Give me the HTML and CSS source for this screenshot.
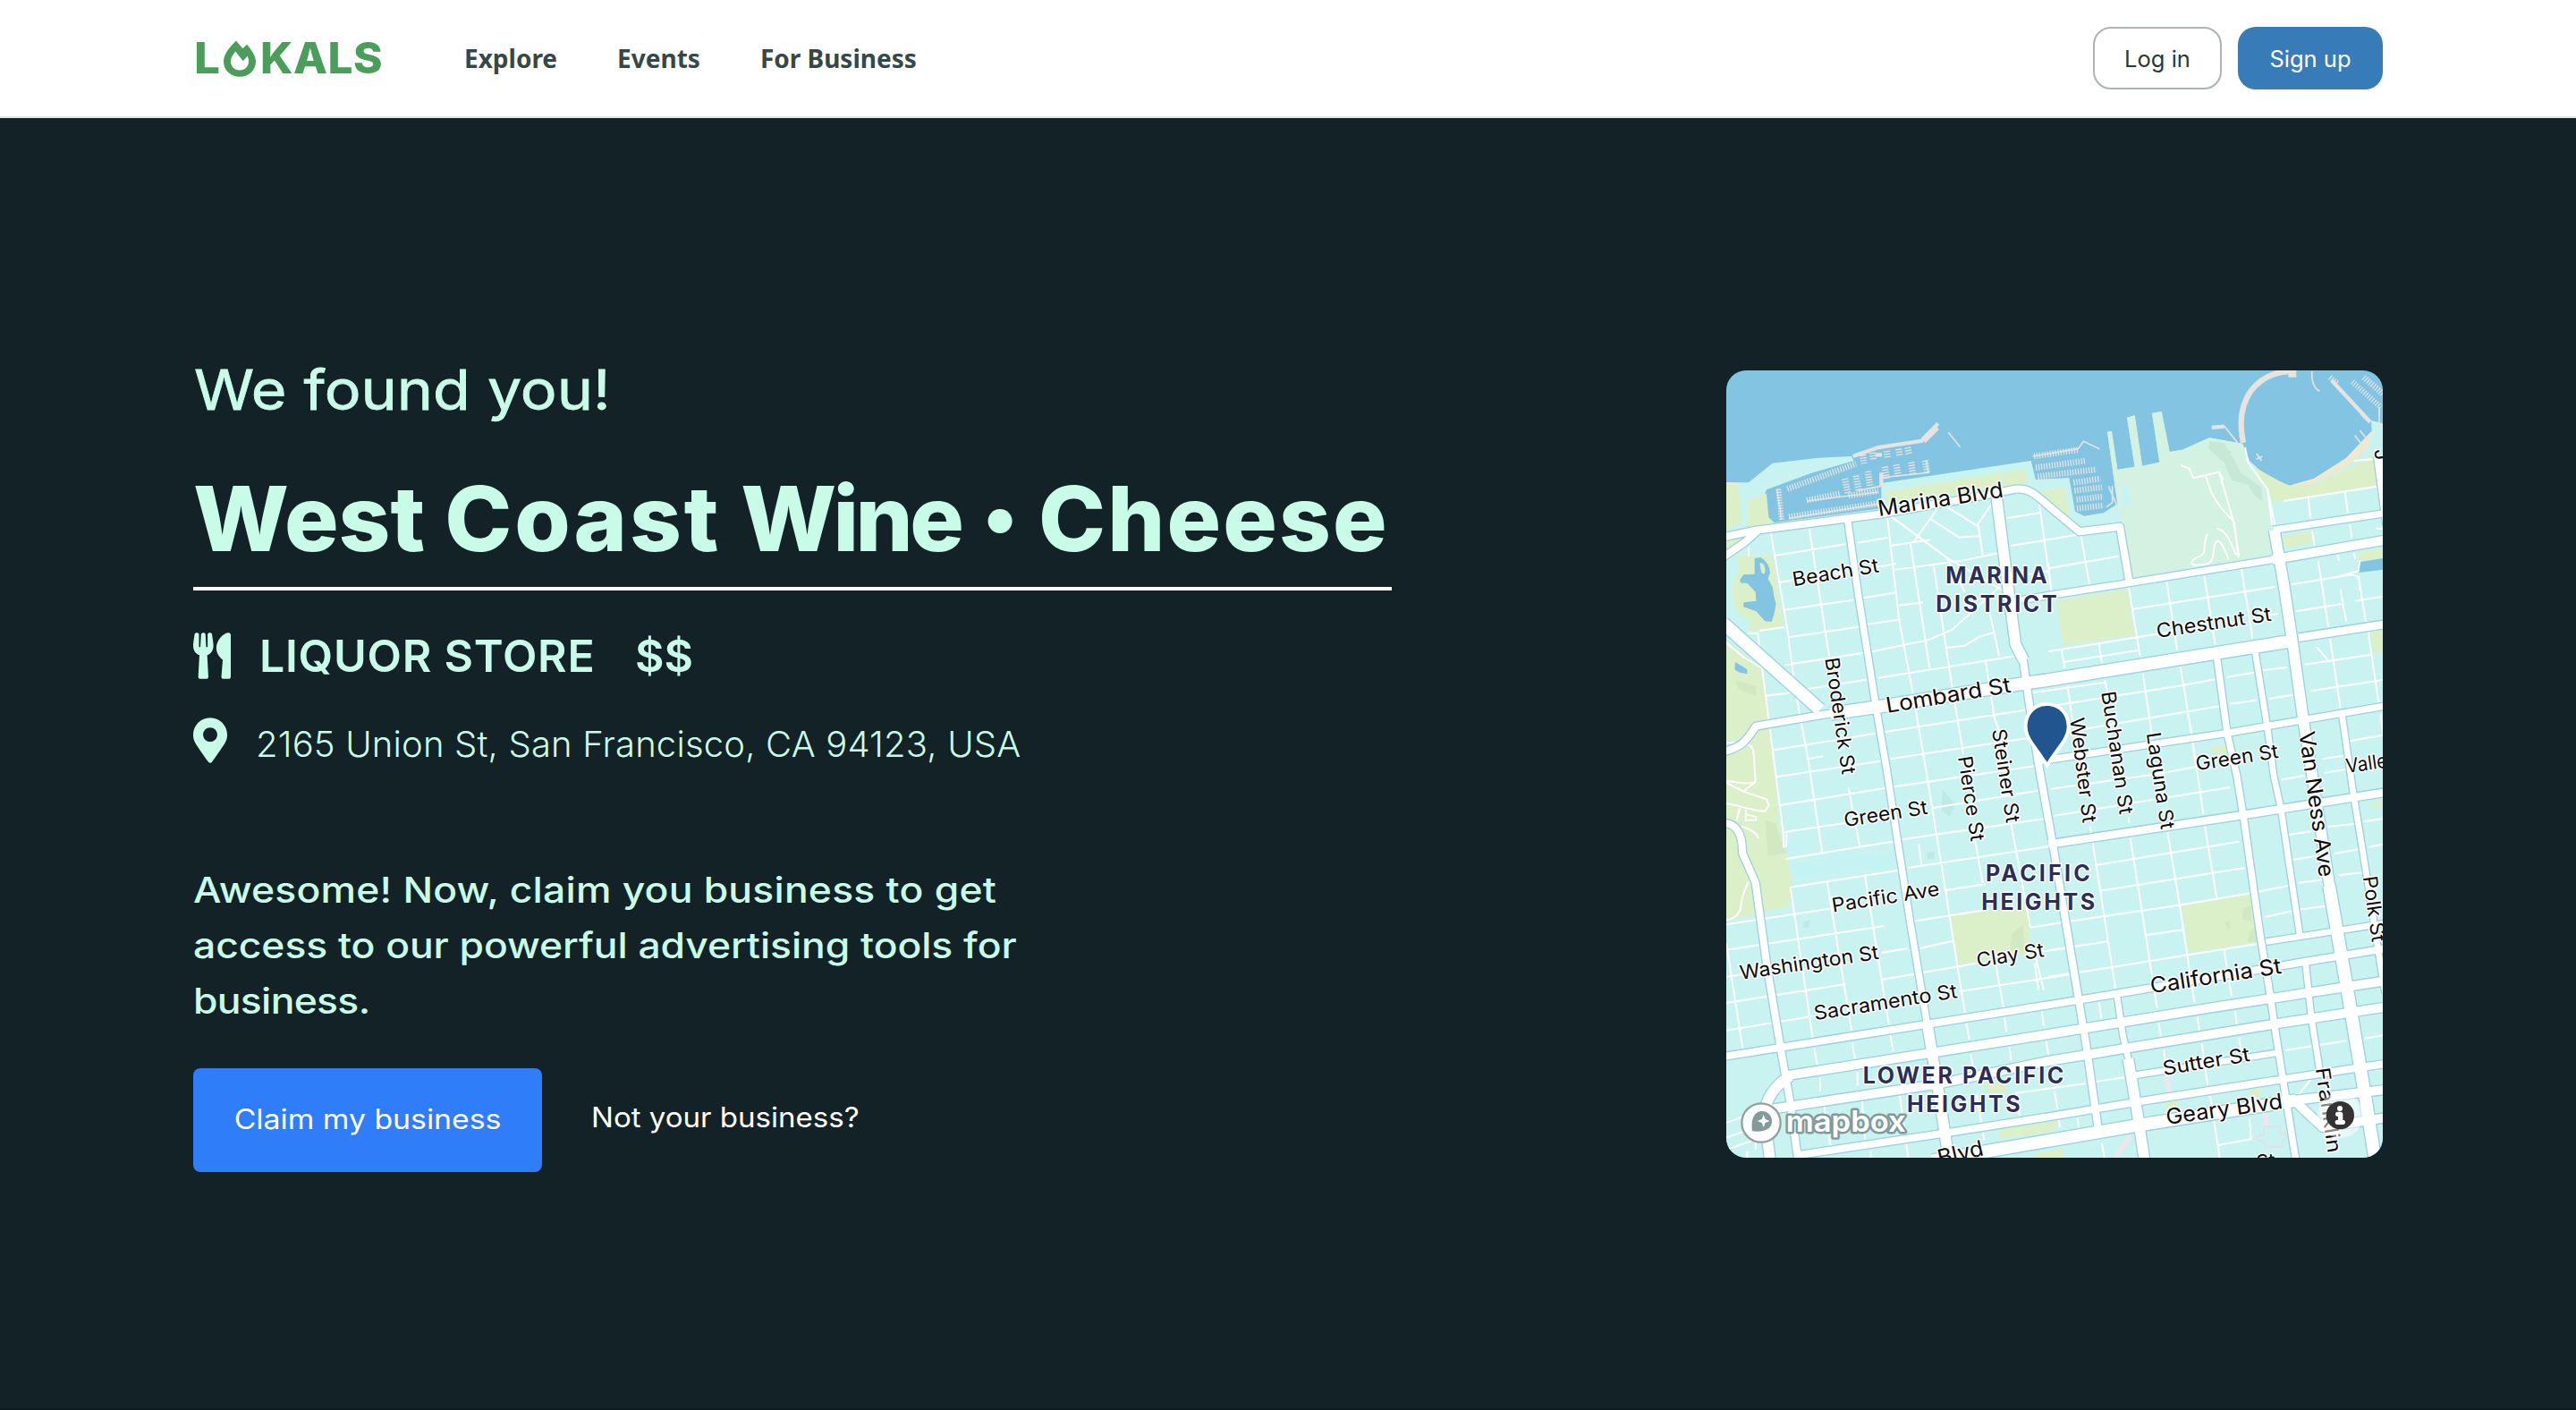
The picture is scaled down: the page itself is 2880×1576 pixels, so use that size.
FILE: index.html
```html
<!DOCTYPE html>
<html lang="en">
<head>
<meta charset="utf-8">
<title>Lokals</title>
<link rel="stylesheet" href="styles.css">
</head>
<body>
<header class="topbar">
  <a class="logo"><span class="logo-l">L</span><svg class="flame" viewBox="135 40 108 122"><path fill-rule="evenodd" d="M177 41L199 67L213 54C228 72 243 92 243 110C243 140 219 162 189 162C159 162 135 140 135 110C135 86 154 64 177 41ZM175 77C165 89 159 98 159 110C159 128 172 140 189 140C206 140 219 128 219 110C219 104 218 99 215 93L200 109Z"/></svg><span class="logo-rest">KALS</span></a>
  <nav class="nav"><a>Explore</a><a>Events</a><a>For Business</a></nav>
  <div class="auth"><button class="btn login">Log in</button><button class="btn signup">Sign up</button></div>
</header>
<main class="hero">
  <section class="copy">
    <p class="kicker">We found you!</p>
    <h1 class="title">West <span class="coast">Coast</span> <span class="wine">Wine</span> <span class="bullet">•</span> <span class="cheese">Cheese</span></h1>
    <div class="row category">
      <svg class="utensils" viewBox="0 0 416 512"><path d="M207.9 15.2c.8 4.7 16.1 94.5 16.1 128.8 0 52.3-27.8 89.6-68.9 104.6L168 486.7c.7 13.7-10.2 25.3-24 25.3H80c-13.7 0-24.7-11.5-24-25.3l12.9-238.1C27.7 233.6 0 196.2 0 144 0 109.6 15.3 19.9 16.1 15.2 19.3-5.1 61.4-5.4 64 16.3v141.2c1.3 3.4 15.1 3.2 16 0 1.4-25.3 7.9-139.2 8-141.8 3.3-20.8 44.7-20.8 47.9 0 .2 2.7 6.6 116.5 8 141.8.9 3.2 14.8 3.4 16 0V16.3c2.6-21.6 44.8-21.4 47.9-1.1zm119.2 285.7l-15 185.1c-1.2 14 9.9 26 23.9 26h56c13.3 0 24-10.7 24-24V24c0-13.2-10.7-24-24-24-82.5 0-221.4 178.5-64.9 300.9z"/></svg>
      <span class="kind">LIQUOR STORE</span><span class="price">$$</span>
    </div>
    <div class="row address">
      <svg class="marker" viewBox="0 0 384 512"><path d="M172.268 501.67C26.97 291.031 0 269.413 0 192 0 85.961 85.961 0 192 0s192 85.961 192 192c0 77.413-26.97 99.031-172.268 309.67-9.535 13.774-29.93 13.773-39.464 0zM192 272c44.183 0 80-35.817 80-80s-35.817-80-80-80-80 35.817-80 80 35.817 80 80 80z"/></svg>
      <span class="street">2165 Union St, San Francisco, CA 94123, USA</span>
    </div>
    <p class="pitch"><span class="line-a">Awesome! Now, claim you business to get</span><br><span class="line-b">access to our powerful advertising tools for</span><br><span class="line-c">business.</span></p>
    <div class="actions"><button class="claim"><span>Claim my business</span></button><a class="not-yours">Not your business?</a></div>
  </section>
  <svg class="map" viewBox="30 42 2202 2640">
    <defs>
      <g id="roads">
        <path class="w20" d="M1803 980L1845 1240L1866 1400L1890 1510L1955 1945M1972 2020L1992 2210L2022 2400M2095 1195L2130 1440L2180 1750L2225 2040L2240 2130M1840 1958L2240 1896M1390 2407L1890 2328M1340 2135L1360 2270L1378 2350"/>
        <path class="w22" d="M1080 1352L1710 1258L1970 1213L2240 1167M1675 1000L1710 1258L1742 1400L1765 1540L1820 1930L1850 2110L1875 2280L1905 2470L1942 2700M435 530L472 790L537 1200L568 1380L600 1590L645 1880L703 2230M1865 577L2240 521M1020 812L1110 797L1380 755L1860 677"/>
        <path class="w24" d="M20 601L130 578L540 525L850 470L1000 440C1040 436 1060 450 1115 500L1215 583L1350 566L1383 760M20 668L90 620L135 580M20 1322C90 1300 95 1285 130 1235L350 1197L540 1170M20 1560C60 1560 85 1590 84 1660L128 1760L165 2030L213 2320L245 2500L272 2700M280 2672L780 2597L1110 2545L1420 2493L1890 2420L2240 2367M20 2343L215 2312L700 2235L1110 2170L1460 2112L1970 2025L2240 1981M1025 1010L1045 1150L1075 1350L1125 1630L1170 1900L1215 2170L1238 2310L1278 2590"/>
        <path class="w26" d="M1950 938L2240 893M1110 1631L1750 1535L2240 1457"/>
        <path class="w30" d="M1860 677L2240 611M225 2408L720 2330L1110 2268L1650 2180L2240 2089M150 2524L740 2435L1110 2358L1390 2312L1880 2232L2240 2177M1930 2490L2240 2454M1935 2490L2030 2580L2240 2548M2217 330L2248 560"/>
        <path class="w36" d="M245 2408C190 2440 160 2490 158 2540L178 2700M703 2225L720 2330L745 2480L778 2700M937 470L975 770L1000 960L1028 1015M1378 2350L1410 2540L1434 2700M1868 577L1900 760L1930 960L1967 1225L1995 1400L2055 1780L2080 1930"/>
        <path class="w42" d="M20 890L345 1180M380 1193L540 1170L1040 1090L1110 1080L1935 948M720 2692L1110 2625L1420 2572L1940 2490M2052 1770L2080 1930L2120 2160L2175 2490L2208 2700"/>
      </g>
    </defs>
    <rect class="water" x="30" y="42" width="2202" height="2640"/>
    <path class="land" d="M20 418L105 418L185 353L340 335L450 330L458 345L320 385L165 442L160 452L172 535L190 553L550 505V420L1052 345L1068 408L1180 402L1200 515L1230 530L1295 520L1342 490L1308 248L1323 246L1342 375L1400 365L1374 200L1400 193L1425 362L1483 350L1458 185L1490 180L1517 315L1560 308L1650 268L1762 288L1785 345L1840 395L1920 428L2020 400L2110 335L2195 245L2193 210L2240 222V2700H20Z"/>
    <path class="sand" d="M20 416L70 420V430H20ZM1900 425L1920 428L2000 405L2110 335L2195 245L2185 300L2100 375L1990 425L1920 435Z"/>
    <path class="fort" d="M1308 248L1323 246L1342 375L1400 365L1374 200L1400 193L1425 362L1483 350L1458 185L1490 180L1517 315L1560 308L1650 268L1762 288L1775 350L1840 440L1860 580L1862 665L1392 737L1360 560L1342 490Z"/>
    <path class="fort-hill" d="M1650 280L1700 285L1735 345L1755 385L1825 435L1828 480L1800 460L1780 425L1725 410L1700 350L1648 305ZM1690 308L1722 312V345L1700 335Z"/>
    <path class="park" d="M20 425L70 428L84 550L20 585ZM100 480L165 455L172 535L190 553L100 568ZM30 610L110 600L60 635L30 650ZM60 662H185L222 900L100 918L115 880C70 870 45 830 50 770C55 720 90 715 60 662ZM20 940L155 1045L180 1240L205 1560L230 1650L252 1760L240 1840L30 1890H20V1340L90 1310L130 1260L165 1180ZM20 940L150 1050L172 1200L100 1260L20 1300ZM568 447L1030 372L1045 420L1000 425L570 485ZM1080 445L1165 435L1182 535L1110 475ZM1138 815L1375 775L1398 930L1160 965ZM1895 598L1992 580L1996 620L1900 637ZM1800 365L1920 433L2010 420L2120 370L2195 320L2215 428L1865 485L1835 430ZM2145 655L2232 640V672L2150 680ZM2190 920L2232 912V985L2200 992ZM1653 1305L1710 1298V1325L1660 1330ZM2190 1495L2232 1485V1505L2192 1510ZM780 1870L1035 1835L1055 1995L808 2035ZM1557 1835L1785 1802L1812 1960L1582 1995ZM890 2435L970 2430V2465L910 2470ZM945 2588L1140 2560V2590L945 2620ZM1060 2670L1160 2650V2682H1060ZM1500 2500L1545 2492L1550 2515L1505 2520ZM1788 2455L1820 2450L1825 2475L1790 2480Z"/>
    <path class="park-shade" d="M160 1550L195 1560L230 1660L170 1670ZM60 1080L130 1100V1135L70 1110ZM990 1930L1025 1900L1030 1990L980 1985ZM1765 1845L1790 1835V1890L1760 1880ZM1700 1895L1720 1890V1920ZM1785 1925L1810 1900V1958L1780 1960Z"/>
    <path class="land-shade" d="M755 1447L797 1495L780 1540L752 1515ZM705 1658L728 1655V1680H703ZM290 1890L312 1887L305 1910H288Z"/>
    <path class="land-hi" d="M230 1610L310 1610V1640L230 1660ZM245 1700C380 1670 480 1680 590 1660V1710L260 1740ZM1355 432L1378 430L1382 490L1362 498Z"/>
    <path class="pond" d="M125 672L145 669C165 680 175 700 177 720L170 740L186 770L190 800L197 825L190 860L182 885L160 883L130 850L88 835V820L130 815L128 785L100 755H80L75 745L88 727L125 725ZM60 1020L85 1035L100 1045V1060L75 1055L58 1045ZM2152 685L2232 672V710L2152 720Z"/>
    <path class="park" d="M142 690C155 680 165 710 158 725L148 720Z"/>
    <path class="rose" d="M1505 2410L1518 2465M1840 2535V2575M1385 2610L1335 2682"/>
    <path class="rose-line" d="M1832 2578H1890V2600H1906V2625H1895V2645H1835V2628L1808 2620V2612L1832 2605Z"/>
    <g class="dock">
      <path class="d20" d="M690 278L736 232"/><path class="d10" d="M455 330L540 300L690 278M690 276L740 220M550 385V430M530 325H552M2060 75L2190 215M2160 185L2190 215M1658 234L1700 230"/>
      <path class="d16" d="M1764 285C1750 220 1755 160 1790 110C1830 60 1880 45 1930 45"/>
      <path class="d14" d="M1915 48H1942"/>
      <path class="d4" d="M775 250L815 300M545 402L708 385L700 342M1058 330L1210 305L1228 280L1282 305M1995 45C1990 80 2005 105 2020 112M1700 228L1745 285M1808 320L1825 345M1808 340L1828 330M2138 260L2165 295L2155 335M2155 243L2185 280M1325 430V485L1305 500M1312 430L1340 495M470 445L560 428M240 538L540 490M300 480L540 450M2220 165V230M200 440L215 540"/>
      <path class="comb16" d="M205 440L216 545M2055 65L2080 85M2130 80L2225 165"/>
      <path class="comb20" d="M235 440L465 355M300 478L410 455M240 533L540 488M440 462L540 446M1062 330L1210 308M1068 368L1235 345M1075 398L1272 374M2168 65L2232 120"/>
      <path class="comb22" d="M428 405L438 455M465 395L475 448M505 380L512 430M600 358L608 400M562 365L568 405M650 350L656 390M697 345L703 385M488 325L492 355M520 318L524 345M568 312L571 335M608 305L612 330M638 300L643 322"/>
      <path class="comb20" d="M1195 418L1285 405M1198 445L1290 434M1205 475L1295 465M1206 505L1296 495"/>
    </g>
    <g class="minor">
      <path d="M180 590L238 930L250 1030L275 1190L305 1350L352 1660M308 570L375 1000M570 535L610 880L655 1120L698 1370L750 1690L830 2195M648 625L712 1040M725 695L787 1100L825 1330M580 530L770 670L975 790M735 510L660 615M715 540L810 602L880 597M770 500L870 562L920 490M875 560L890 660M770 670L830 785M950 765L790 910L710 945L520 985M770 972L830 965L880 935L930 920M915 860L945 1000M900 1020L930 1210L945 1250M190 663L430 625M470 620L570 603M580 630L715 610M597 710L820 680L940 655M210 752L440 718M480 712L600 690M225 845L455 812M490 805L600 787M610 830L690 820M240 937L485 900M505 893L615 877M225 1030L520 985M250 1118L510 1078M540 1073L1000 1000M165 1133L280 1118M105 635V665M100 923H135M140 915L225 903M135 920L150 1040L190 1350L222 1600V1640L232 1635V1590M190 1315L540 1258L1040 1180M580 1345L1040 1275M303 1345L355 1336M200 1405L560 1350M210 1500L580 1440L1090 1365M225 1590L430 1560M720 1510L1085 1450M620 1615L1100 1545M230 1680L600 1620M640 1710L1115 1638M245 1775L610 1718M765 1785L900 1765M30 1900L390 1845M650 1890L780 1870L900 1852M1050 1910L1150 1895M30 1985L560 1905M680 1980L790 1955M30 2075L100 2065M550 1995L640 1980M30 2163L430 2100M550 2085L870 2030M1060 1995L1180 1978M30 2255L320 2207M810 2125L1200 2065M30 2565L110 2535M30 2615L100 2590M30 2655L130 2620L128 2655M100 2660V2682M245 1775L320 2280M368 1755L450 2255M495 1735L575 2235M30 1965L85 2315M440 1440L478 1640M865 1620L890 1760M985 1560L1050 1910M1060 1980L1095 2120M675 1630L685 1700M935 2040L960 2180M1065 2030L1077 2120M325 2315L335 2370M452 2295L462 2350M580 2270L590 2325M835 2230L845 2285M963 2212L970 2260M1088 2190L1095 2240M345 2415V2460M470 2395V2440M850 2335L858 2380M980 2310L985 2355M1103 2290L1110 2335M358 2505L380 2645M485 2485L495 2620M515 2660V2682M610 2460L640 2682M870 2470L895 2625M1000 2460L1015 2540M1000 2465L1110 2450"/>
      <path d="M30 955L90 1005L150 1040M30 1290C50 1290 80 1290 110 1300C125 1310 122 1340 128 1420L120 1425C90 1430 60 1420 30 1420M30 1425L90 1455L165 1480L173 1500L160 1520C110 1520 80 1500 30 1495M75 1510L65 1550M95 1515V1555M95 1530L130 1540V1550H100M30 1885C70 1880 80 1850 80 1830C85 1790 100 1770 105 1755M80 1570C110 1580 130 1590 138 1610M128 1420C125 1430 95 1440 90 1455"/>
      <path d="M1120 1445L1480 1395L1610 1370M1130 1535L1720 1440M1265 1702L1750 1622M1280 1788L1770 1710M1110 1900L1550 1835L1790 1795M1110 1987L1310 1957M1440 1935L1560 1918M1215 2060L1810 1965M1110 2075L1180 2065M1890 1415L1970 1400M2035 1392L2120 1378M1910 1600L1990 1588M2050 1572L2140 1562M1930 1683L2010 1670M2070 1662L2150 1648M1815 1790L1940 1765M1950 1760L2030 1750M2085 1735L2170 1725M1835 1875L1950 1850L2040 1838M2170 1555L2232 1545M2185 1640L2232 1632M2170 2282L2232 2272M1905 2322L2110 2290M1270 2427L1365 2413M1110 2450L1235 2433M1680 2640L1790 2620L1785 2550M1250 1570L1285 1790L1335 2115M1380 1540V1560M1385 1610L1425 1860L1475 2180M1510 1590L1550 1830L1600 2160M1635 1570L1675 1810M1700 1985L1725 2140M1595 1290L1630 1530M1280 2160L1288 2215M1480 2230L1488 2275M1610 2210L1617 2255M1737 2190L1742 2235M1498 2320L1505 2400M1625 2300L1645 2440M1750 2280L1758 2325M1653 2475L1685 2682M1290 2635L1298 2682M1208 2550L1212 2580M1145 2555L1150 2580M1130 2460L1142 2520M1950 2470L1990 2420"/>
      <path d="M970 538L1080 520M1080 490L1120 780M985 630L1345 570M1115 705L1345 665M1020 730L1110 715M1220 595L1248 760M1110 690L1120 780M1390 843L1870 768M1110 985L1510 920M1160 1020L1415 980M1800 870L1880 858M1925 760L2120 728C2150 725 2155 740 2155 780M1940 850L2095 825M2140 815L2232 800M1970 1028L2195 995M1990 1117L2232 1080M1040 1125L1300 1088M1040 1180L1560 1098L1670 1078M1710 1070L1800 1055M1830 1048L1910 1038M1080 1270L1685 1168M1720 1160L1810 1148M1850 1143L1930 1130M1900 480L2232 428M2135 345L2200 340M1380 770L1418 1000M1507 750L1542 980M1633 730L1670 960M1758 708L1795 940M1982 470L1990 540M2105 450L2115 520M1995 580L2003 630M2122 560L2128 605M2015 680L2050 905M2150 730L2175 885M2055 940L2090 1175M2183 920L2218 1155M1155 980L1165 1040M1280 960L1290 1020M1175 1100L1195 1240M1300 1080L1310 1130M1427 1058L1460 1280M1553 1035L1590 1260L1605 1370M2010 970L2050 1015M2090 775L2098 825L2110 885M2080 660L2085 680M2135 655L2140 675M2085 732L2150 715L2155 680M1770 300L1780 350L1845 440L1870 560M1845 440L1860 560M2210 572H2232M1555 360L1583 372L1597 403L1683 383L1695 405L1690 420M1640 398C1650 450 1680 500 1730 545L1750 665M1683 383L1735 560L1748 670M1675 573C1700 575 1715 600 1740 660M1645 590C1625 620 1645 650 1620 665C1590 675 1580 695 1605 695C1640 690 1660 700 1665 650C1670 590 1690 610 1715 675M2225 1195L2232 1260M2120 1285L2232 1265M2030 1345L2110 1333"/>
    </g>
    <g class="casing"><use href="#roads"/></g>
    <g class="fill"><use href="#roads"/></g>
    <g class="labels">
      <g class="lg">
        <text transform="translate(542 531) rotate(-8.8)" textLength="425" lengthAdjust="spacingAndGlyphs">Marina Blvd</text>
        <text transform="translate(570 1191) rotate(-9.6)" textLength="423" lengthAdjust="spacingAndGlyphs">Lombard St</text>
        <text transform="translate(1951 1256) rotate(82)" textLength="492" lengthAdjust="spacingAndGlyphs">Van Ness Ave</text>
        <text transform="translate(1456 2131) rotate(-8.8)" textLength="444" lengthAdjust="spacingAndGlyphs">California St</text>
        <text transform="translate(1508 2571) rotate(-8)" textLength="394" lengthAdjust="spacingAndGlyphs">Geary Blvd</text>
        <text transform="translate(745 2708) rotate(-13)" textLength="155" lengthAdjust="spacingAndGlyphs">Blvd</text>
      </g>
      <text transform="translate(256 766) rotate(-9.5)" textLength="292" lengthAdjust="spacingAndGlyphs">Beach St</text>
      <text transform="translate(1476 939) rotate(-8.6)" textLength="389" lengthAdjust="spacingAndGlyphs">Chestnut St</text>
      <text transform="translate(361 1008) rotate(81.6)" textLength="395" lengthAdjust="spacingAndGlyphs">Broderick St</text>
      <text transform="translate(921 1247) rotate(81.3)" textLength="318" lengthAdjust="spacingAndGlyphs">Steiner St</text>
      <text transform="translate(807 1339) rotate(81.3)" textLength="288" lengthAdjust="spacingAndGlyphs">Pierce St</text>
      <text transform="translate(1183 1210) rotate(83)" textLength="354" lengthAdjust="spacingAndGlyphs">Webster St</text>
      <text transform="translate(1288 1121) rotate(81.5)" textLength="417" lengthAdjust="spacingAndGlyphs">Buchanan St</text>
      <text transform="translate(1439 1259) rotate(81.3)" textLength="328" lengthAdjust="spacingAndGlyphs">Laguna St</text>
      <text transform="translate(1608 1384) rotate(-9)" textLength="280" lengthAdjust="spacingAndGlyphs">Green St</text>
      <text transform="translate(2111 1392) rotate(-8)" textLength="270" lengthAdjust="spacingAndGlyphs">Vallejo St</text>
      <text transform="translate(428 1573) rotate(-9)" textLength="283" lengthAdjust="spacingAndGlyphs">Green St</text>
      <text transform="translate(388 1859) rotate(-9)" textLength="364" lengthAdjust="spacingAndGlyphs">Pacific Ave</text>
      <text transform="translate(79 2085) rotate(-8.6)" textLength="470" lengthAdjust="spacingAndGlyphs">Washington St</text>
      <text transform="translate(328 2221) rotate(-9)" textLength="485" lengthAdjust="spacingAndGlyphs">Sacramento St</text>
      <text transform="translate(873 2043) rotate(-9)" textLength="228" lengthAdjust="spacingAndGlyphs">Clay St</text>
      <text transform="translate(2165 1741) rotate(82)" textLength="222" lengthAdjust="spacingAndGlyphs">Polk St</text>
      <text transform="translate(1498 2406) rotate(-9.5)" textLength="295" lengthAdjust="spacingAndGlyphs">Sutter St</text>
      <text transform="translate(2006 2383) rotate(81.5)" textLength="288" lengthAdjust="spacingAndGlyphs">Franklin</text>
      <text transform="translate(1812 2722) rotate(-9)">St</text>
      <text transform="translate(2203 308) rotate(82)">J</text>
    </g>
    <g class="areas">
      <text x="766" y="757" textLength="340">MARINA</text>
      <text x="733" y="852" textLength="406">DISTRICT</text>
      <text x="900" y="1755" textLength="350">PACIFIC</text>
      <text x="886" y="1850" textLength="380">HEIGHTS</text>
      <text x="488" y="2432" textLength="674">LOWER PACIFIC</text>
      <text x="636" y="2528" textLength="380">HEIGHTS</text>
    </g>
    <path class="pin" d="M1106 1167C1145 1167 1172 1196 1172 1236C1172 1275 1141 1300 1106 1356C1071 1300 1040 1275 1040 1236C1040 1196 1067 1167 1106 1167Z"/>
    <g class="brand">
      <circle class="ring" cx="147" cy="2565" r="65"/>
      <path class="drop" d="M117 2593C112 2555 122 2526 150 2526C170 2526 183 2542 183 2560C183 2588 155 2597 117 2593Z"/>
      <path class="star" d="M155 2538L161 2553L176 2559L161 2565L155 2580L149 2565L134 2559L149 2553Z"/>
      <text x="230" y="2594" textLength="402" lengthAdjust="spacingAndGlyphs">mapbox</text>
    </g>
    <circle class="info-halo" cx="2089" cy="2540" r="76"/>
    <circle class="info" cx="2089" cy="2540" r="47"/>
    <path class="info-i" d="M2081 2536H2090V2563M2080 2563H2098"/><circle class="info-dot" cx="2088" cy="2517" r="9"/>
  </svg>
</main>
</body>
</html>
```
FILE: styles.css
```css
* { box-sizing: border-box; }
body { margin: 0; background: #0e1a20; font-family: Inter, "Liberation Sans", sans-serif; }
p, h1 { margin: 0; }
button { font-family: inherit; border: 0; padding: 0; }
.topbar { height: 132px; padding: 0 216px; display: flex; align-items: center; background: #fff; border-bottom: 2px solid #dde3e1; }
.logo { display: flex; align-items: center; width: 303px; padding-left: 1px; color: #4a9d5a; font-weight: 800; font-size: 47.5px; line-height: 58px; }
.logo-l { width: 33px; transform: scaleX(1.08); transform-origin: left; }
.flame { width: 36px; height: 41px; fill: #4a9d5a; margin-right: 5px; }
.logo-rest { letter-spacing: .5px; transform: scaleX(1.04); transform-origin: left; }
.nav { display: flex; gap: 67px; color: #344848; font-family: "Noto Sans", "Open Sans", sans-serif; font-weight: 700; font-size: 28px; line-height: 38px; }
.auth { margin-left: auto; display: flex; gap: 18px; }
.btn { height: 70px; border-radius: 20px; font-size: 25.5px; }
.login { width: 144px; background: #fff; border: 2px solid #adb4b3; color: #2a3838; }
.signup { width: 162px; background: #377bb8; color: #fff; }
.hero { height: 1442px; background: #132226; display: flex; justify-content: space-between; align-items: flex-start; padding: 0 216px; color: #c9fce8; }
.copy { width: 1340px; padding-top: 266px; }
.kicker { width: max-content; font-size: 61.5px; line-height: 76px; height: 74px; padding-left: 1px; transform: scaleX(1.107); transform-origin: left; -webkit-text-stroke: .8px currentColor; }
.title { margin-top: 47px; font-size: 101px; line-height: 120px; height: 141px; font-weight: 800; border-bottom: 4px solid #fff; white-space: nowrap; }
.coast { letter-spacing: 2.9px; }
.wine { letter-spacing: -3.6px; }
.bullet { margin: 0 2px 0 3px; font-size: 86px; line-height: 0; vertical-align: 9px; }
.cheese { letter-spacing: 2.1px; }
.row { display: flex; fill: #c9fce8; }
.category { margin-top: 43px; height: 60px; align-items: center; font-size: 50px; font-weight: 600; line-height: 60px; }
.utensils { width: 42px; height: 52px; }
.kind { margin-left: 32px; width: 420px; letter-spacing: .75px; }
.address { margin-top: 39px; height: 52px; font-size: 40px; font-weight: 300; line-height: 48px; }
.marker { width: 38px; height: 51px; }
.street { margin: 6px 0 0 32px; letter-spacing: .17px; }
.pitch { margin-top: 110px; width: max-content; font-size: 39.5px; line-height: 62px; font-weight: 480; transform: scaleX(1.125); transform-origin: left; }
.line-a { letter-spacing: .2px; }
.line-b { letter-spacing: -.05px; }
.line-c { letter-spacing: -.6px; }
.actions { margin-top: 44px; display: flex; color: #fff; font-size: 31px; line-height: 110px; }
.claim { width: 390px; height: 116px; padding-bottom: 3px; border-radius: 8px; background: #2f7df8; color: #fff; font-size: 31px; }
.claim span { display: inline-block; transform: scaleX(1.09); }
.not-yours { margin-left: 55px; transform: scaleX(1.066); transform-origin: left; }
.map { width: 734px; height: 880px; margin-top: 282px; border-radius: 22px; display: block; overflow: hidden; }
.water, .pond { fill: #82c4e2; }
.land { fill: #c9f3f0; }
.sand { fill: #efe9cf; }
.fort { fill: #d4f2e1; }
.fort-hill { fill: #c8e8d6; }
.park { fill: #dbf0c9; }
.park-shade { fill: #d2e8c2; }
.land-shade { fill: #bfe9e6; }
.land-hi { fill: #c5f2f3; }
.rose { stroke: #e9e8ee; stroke-width: 20px; fill: none; }
.rose-line { stroke: #dfe0ea; stroke-width: 5px; fill: none; }
.dock path { fill: none; stroke: #e5e4e1; }
.dock .d4 { stroke-width: 5px; }
.dock .d10 { stroke-width: 13px; }
.dock .d14 { stroke-width: 34px; }
.dock .d16 { stroke-width: 19px; }
.dock .d20 { stroke-width: 22px; }
.dock .comb16 { stroke-width: 18px; stroke-dasharray: 4 5; }
.dock .comb20 { stroke-width: 20px; stroke-dasharray: 4 5; }
.dock .comb22 { stroke-width: 22px; stroke-dasharray: 4 5; }
.minor path { fill: none; stroke: #fff; stroke-width: 6px; stroke-linejoin: round; }
.w20 { --w: 20px; }
.w22 { --w: 22px; }
.w24 { --w: 24px; }
.w26 { --w: 26px; }
.w30 { --w: 30px; }
.w36 { --w: 35px; }
.w42 { --w: 41px; }
#roads path { fill: none; stroke-width: calc(var(--w) + var(--edge)); stroke-linejoin: round; }
.casing { --edge: 8px; stroke: #9cd1dc; }
.fill { --edge: 0px; stroke: #fff; }
.labels text, .areas text { paint-order: stroke; stroke: #fff; stroke-width: 9px; stroke-linejoin: round; }
.labels text { font-size: 66px; font-weight: 430; fill: #0b0b0b; }
.labels .lg text { font-size: 73px; }
.areas text { font-size: 75px; font-weight: 650; fill: #2b2e57; }
.pin { fill: #20558f; stroke: #fff; stroke-width: 24px; paint-order: stroke; }
.ring { fill: #fff; fill-opacity: .9; stroke: #979f9f; stroke-width: 7px; }
.drop { fill: #829b9a; }
.star { fill: #fff; }
.brand text { font-size: 98px; font-weight: 600; fill: #fff; stroke: #829b9a; stroke-width: 15px; paint-order: stroke; stroke-linejoin: round; }
.info-halo { fill: #fff; fill-opacity: .5; }
.info { fill: #333; }
.info-i { fill: none; stroke: #fff; stroke-width: 16px; stroke-linecap: round; stroke-linejoin: round; }
.info-dot { fill: #fff; }
```
